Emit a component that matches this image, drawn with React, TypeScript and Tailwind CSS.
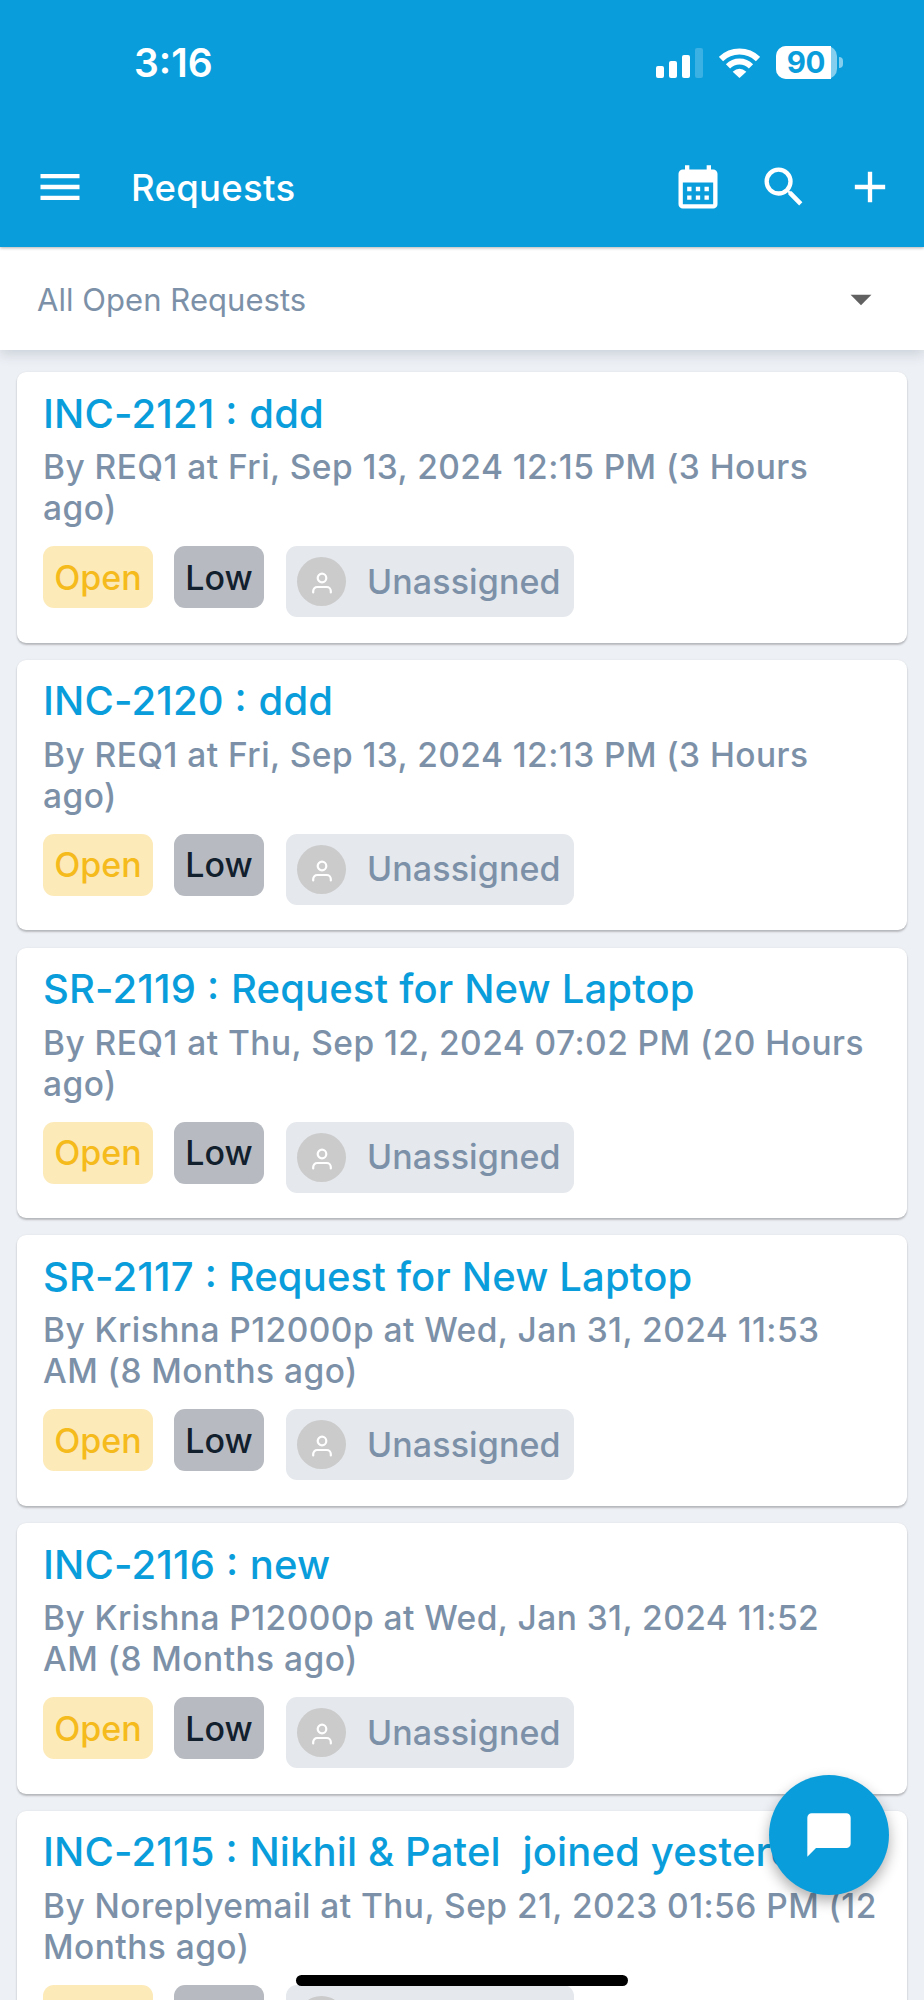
import React from 'react';

interface RequestItem {
    id: string;
    title: string;
    meta: string;
}

const requests: RequestItem[] = [
    { id: 'INC-2121', title: 'ddd', meta: 'By REQ1 at Fri, Sep 13, 2024 12:15 PM (3 Hours ago)' },
    { id: 'INC-2120', title: 'ddd', meta: 'By REQ1 at Fri, Sep 13, 2024 12:13 PM (3 Hours ago)' },
    { id: 'SR-2119', title: 'Request for New Laptop', meta: 'By REQ1 at Thu, Sep 12, 2024 07:02 PM (20 Hours ago)' },
    { id: 'SR-2117', title: 'Request for New Laptop', meta: 'By Krishna P12000p at Wed, Jan 31, 2024 11:53 AM (8 Months ago)' },
    { id: 'INC-2116', title: 'new', meta: 'By Krishna P12000p at Wed, Jan 31, 2024 11:52 AM (8 Months ago)' },
    { id: 'INC-2115', title: 'Nikhil & Patel  joined yesterday', meta: 'By Noreplyemail at Thu, Sep 21, 2023 01:56 PM (12 Months ago)' }
];

const Icon = ({ d, className }: { d: string; className: string }) => (
    <svg viewBox="0 0 24 24" fill="currentColor" className={className}>
        <path fillRule="evenodd" d={d} />
    </svg>
);

const SignalIcon = () => (
    <svg viewBox="0 0 47 30" fill="white" className="w-[47px] h-[30px]">
        <rect x="0" y="18" width="8" height="12" rx="2" />
        <rect x="13" y="13" width="8" height="17" rx="2" />
        <rect x="26" y="7" width="8" height="23" rx="2" />
        <rect x="39" y="0" width="8" height="30" rx="2" opacity="0.2" />
    </svg>
);

const WifiIcon = () => (
    <svg viewBox="0 0 123 90" className="w-[41px] h-[30px]">
        <g fill="none" stroke="white" strokeWidth="18">
            <path d="M6 33 A80 80 0 0 1 117 33" />
            <path d="M27 55 A49 49 0 0 1 96 55" />
        </g>
        <path fill="white" d="M41 71 Q61.500 53 82 71 L64 88 Q61.500 91 59 88 Z" />
    </svg>
);

const Battery = () => (
    <div className="flex items-center gap-[2px]">
        <div className="w-[61px] h-[33px] rounded-[10px] bg-white/50">
            <div className="w-[55px] h-full rounded-l-[10px] bg-white flex items-center justify-center pl-[5px] text-[29.500px] leading-none font-bold tracking-[-0.300px] text-[#0a9ddb]">
                90
            </div>
        </div>
        <div className="w-[4px] h-[11px] rounded-r-full bg-white/50" />
    </div>
);

const RequestCard = ({ item }: { item: RequestItem }) => (
    <div className="h-[270.500px] shrink-0 rounded-[9px] bg-white px-[26px] pt-[16.500px] shadow-[0_2px_2px_rgba(0,0,0,0.22),0_0_2px_rgba(0,0,0,0.08)]">
        <h2 className="h-[50px] text-[40px] leading-[50px] font-medium tracking-[0.150px] text-[#0a9ddb] whitespace-pre overflow-hidden">
            {item.id} <span className="[font-feature-settings:'case'] tracking-[1px]">:</span> {item.title}
        </h2>
        <p className="mt-[8.500px] text-[33.500px] leading-[41px] font-[480] tracking-[0.450px] text-[#7c91a8]">{item.meta}</p>
        <div className="mt-[17px] flex items-start text-[34px] font-[480]">
            <span className="w-[110px] h-[62px] rounded-[11px] bg-[#fdeab9] text-[#f5ba1c] flex items-center justify-center">Open</span>
            <span className="ml-[21px] w-[90px] h-[62px] rounded-[11px] bg-[#b7bbc1] text-[#12202e] flex items-center justify-center">Low</span>
            <span className="ml-[22px] w-[287.500px] h-[71px] rounded-[11px] bg-[#e5e8ed] text-[#7c91a8] flex items-center pl-[11px]">
                <span className="w-[49px] h-[49px] rounded-full bg-[#cbcbcb] flex items-center justify-center">
                    <svg viewBox="0 0 20 22" fill="none" stroke="white" strokeWidth="2.200" strokeLinecap="round" className="mt-[3px] w-[20px] h-[22px]">
                        <circle cx="10" cy="6" r="4.300" />
                        <path d="M1.200 20.500v-1.500a4 4 0 0 1 4-4h9.600a4 4 0 0 1 4 4v1.500" />
                    </svg>
                </span>
                <span className="ml-[21px] mb-[1px] tracking-[0.100px]">Unassigned</span>
            </span>
        </div>
    </div>
);

const App = () => {
    return (
        <div className="relative w-[924px] h-[2000px] overflow-hidden bg-[#edf0f5] font-['Inter',sans-serif] flex flex-col">
            <header className="relative z-20 h-[247px] shrink-0 bg-[#0a9ddb] text-white shadow-[0_1px_3px_rgba(0,0,0,0.3)]">
                <div className="h-[125px] flex items-center pl-[134px] pr-[81px]">
                    <span className="mt-[2px] text-[39px] font-semibold">3:16</span>
                    <div className="ml-auto flex items-center">
                        <SignalIcon />
                        <div className="ml-[16px] mr-[16px]"><WifiIcon /></div>
                        <Battery />
                    </div>
                </div>
                <div className="h-[124px] flex items-center pl-[34px] pr-[28px]">
                    <Icon className="w-[52px] h-[52px]" d="M3 18h18v-2H3v2zm0-5h18v-2H3v2zm0-7v2h18V6H3z" />
                    <h1 className="ml-[45px] mt-[2px] text-[36.500px] font-medium tracking-[0.300px]">Requests</h1>
                    <div className="ml-auto flex items-center gap-[34px]">
                        <Icon
                            className="mt-[4px] w-[52px] h-[52px]"
                            d="M19 3h-1V1h-2v2H8V1H6v2H5a2 2 0 0 0-2 2v14a2 2 0 0 0 2 2h14a2 2 0 0 0 2-2V5a2 2 0 0 0-2-2zm0 16H5V9h14v10zM7 11h2v2H7zm4 0h2v2h-2zm4 0h2v2h-2zM7 15h2v2H7zm4 0h2v2h-2zm4 0h2v2h-2z"
                        />
                        <Icon
                            className="w-[52px] h-[52px]"
                            d="M15.500 14h-.79l-.28-.27A6.471 6.471 0 0 0 16 9.500 6.500 6.500 0 1 0 9.500 16c1.610 0 3.090-.59 4.230-1.570l.27.28v.79l5 4.990L20.490 19l-4.990-5zm-6 0a4.500 4.500 0 1 1 0-9 4.500 4.500 0 0 1 0 9z"
                        />
                        <Icon className="w-[52px] h-[52px]" d="M19 13h-6v6h-2v-6H5v-2h6V5h2v6h6v2z" />
                    </div>
                </div>
            </header>

            <div className="relative z-10 h-[103px] shrink-0 bg-white flex items-center pl-[37px] pr-[38px] shadow-[0_4px_12px_rgba(60,80,100,0.2)]">
                <span className="mt-[3px] text-[31px] text-[#7c91a8] tracking-[0.050px]">All Open Requests</span>
                <Icon className="ml-auto w-[50px] h-[50px] text-[#616161]" d="M7 10l5 5 5-5z" />
            </div>

            <main className="mt-[22px] px-[17px] flex flex-col gap-[17.300px]">
                {requests.map(item => <RequestCard key={item.id} item={item} />)}
            </main>

            {/* Chat */}
            <button className="absolute z-20 left-[769px] top-[1775px] w-[120px] h-[120px] rounded-full bg-[#0a9ddb] text-white flex items-center justify-center shadow-[0_6px_14px_rgba(0,0,0,0.32)]">
                <Icon className="w-[52px] h-[52px]" d="M20 2H4a2 2 0 0 0-2 2v18l4-4h14a2 2 0 0 0 2-2V4a2 2 0 0 0-2-2z" />
            </button>

            {/* Home indicator */}
            <div className="absolute z-30 left-[296px] top-[1975px] w-[332px] h-[11px] rounded-full bg-black" />
        </div>
    );
};

export default App;
